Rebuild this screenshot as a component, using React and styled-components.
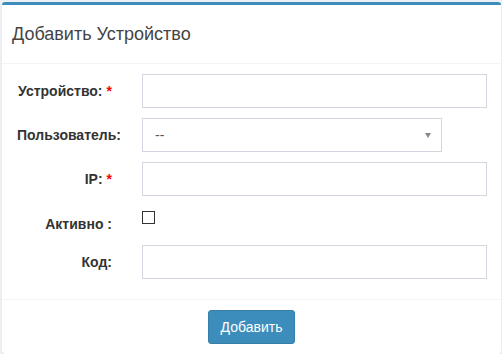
import React from "react";
import styled, { createGlobalStyle } from "styled-components";

const Global = createGlobalStyle`
  html, body { margin: 0; padding: 0; }
  body {
    background: #ecf0f5;
    font-family: "Liberation Sans", Arial, Helvetica, sans-serif;
    font-size: 14px;
    color: #333;
  }
  * { box-sizing: border-box; }
`;

const Page = styled.div`
  padding: 2px 1px 0 2px;
`;

const Box = styled.div`
  background: #fff;
  border-top: 3px solid #3c8dbc;
  border-radius: 3px;
  box-shadow: 0 1px 1px rgba(0, 0, 0, 0.1);
  height: 352px;
  display: flex;
  flex-direction: column;
`;

const Header = styled.div`
  height: 61px;
  display: flex;
  align-items: center;
  padding: 0 10px;
  border-bottom: 1px solid #f4f4f4;
`;

const Title = styled.h3`
  margin: 0;
  font-size: 18px;
  font-weight: normal;
  line-height: 1;
  color: #444;
`;

const Body = styled.div`
  padding: 10px 14px 20px 15px;
  display: flex;
  flex-direction: column;
  gap: 10px;
`;

const Row = styled.div`
  display: grid;
  grid-template-columns: 95px 1fr;
  column-gap: 30px;
  min-height: ${(p) => (p.$short ? "29px" : "34px")};
`;

const Label = styled.label`
  display: block;
  text-align: right;
  white-space: nowrap;
  font-weight: bold;
  line-height: 20px;
  padding-top: ${(p) => p.$top || 7}px;
  color: #333;
`;

const Star = styled.span`
  color: #ff0000;
  font-weight: bold;
  margin-left: 4px;
`;

const Input = styled.input`
  display: block;
  width: 100%;
  height: 34px;
  border: 1px solid #d2d6de;
  border-radius: 0;
  padding: 6px 12px;
  font-family: inherit;
  font-size: 14px;
  outline: none;
  background: #fff;
`;

const SelectBox = styled.div`
  position: relative;
  width: 300px;
  height: 34px;
  border: 1px solid #d2d6de;
  display: flex;
  align-items: center;
  padding: 0 12px;
  color: #555;
  background: #fff;
`;

const Arrow = styled.span`
  position: absolute;
  right: 10px;
  top: 14px;
  width: 0;
  height: 0;
  border-left: 3px solid transparent;
  border-right: 3px solid transparent;
  border-top: 5px solid #888;
`;

const Check = styled.input`
  appearance: none;
  -webkit-appearance: none;
  display: block;
  width: 13px;
  height: 13px;
  margin: 5px 0 0 0;
  border: 1px solid #333;
  border-radius: 0;
  background: #fff;
`;

const Footer = styled.div`
  border-top: 1px solid #f4f4f4;
  padding: 10px;
  display: flex;
  justify-content: center;
  margin-top: auto;
`;

const Button = styled.button`
  background: #3c8dbc;
  border: 1px solid #367fa9;
  border-radius: 3px;
  color: #fff;
  font-family: inherit;
  font-size: 14px;
  line-height: 20px;
  padding: 6px 12px;
  cursor: pointer;
`;

export default function App() {
  return (
    <>
      <Global />
      <Page>
        <Box>
          <Header>
            <Title>Добавить Устройство</Title>
          </Header>
          <Body>
            <Row>
              <Label>
                Устройство:<Star>*</Star>
              </Label>
              <Input type="text" />
            </Row>
            <Row>
              <Label>Пользователь:</Label>
              <SelectBox>
                --
                <Arrow />
              </SelectBox>
            </Row>
            <Row>
              <Label>
                IP:<Star>*</Star>
              </Label>
              <Input type="text" />
            </Row>
            <Row $short>
              <Label $top={8}>Активно :</Label>
              <div>
                <Check type="checkbox" />
              </div>
            </Row>
            <Row>
              <Label>Код:</Label>
              <Input type="text" />
            </Row>
          </Body>
          <Footer>
            <Button>Добавить</Button>
          </Footer>
        </Box>
      </Page>
    </>
  );
}
